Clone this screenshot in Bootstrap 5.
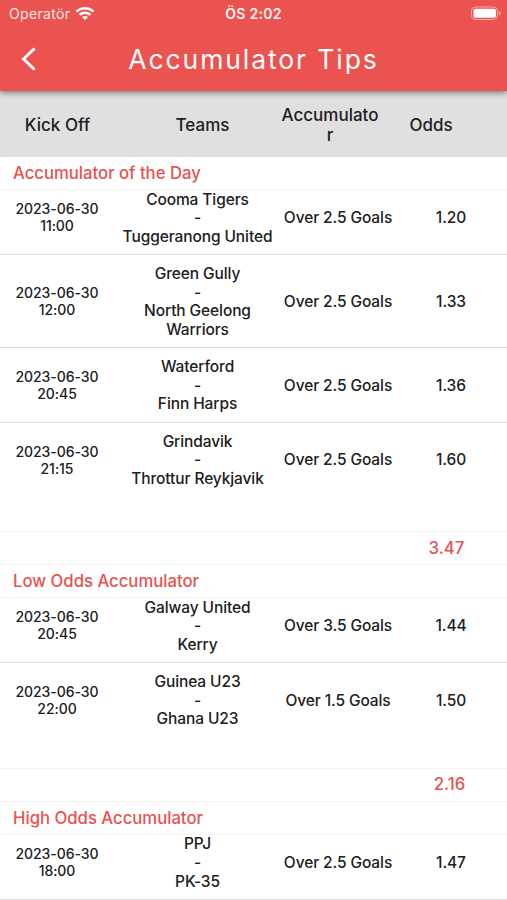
<!DOCTYPE html>
<html lang="tr">
<head>
<meta charset="utf-8">
<meta name="viewport" content="width=device-width, initial-scale=1">
<title>Accumulator Tips</title>
<link href="https://cdn.jsdelivr.net/npm/bootstrap@5.3.0/dist/css/bootstrap.min.css" rel="stylesheet">
<style>
body{font-family:Inter,"Liberation Sans",sans-serif;color:#202020;background:#fff;height:900px;overflow:hidden;font-weight:450}
.app-head{background:#ea534f;height:91px;box-shadow:0 2px 6px rgba(0,0,0,.45);z-index:2}
.status{height:27px;font-size:14px;line-height:27px;color:#ffe9e6}
.status .carrier{font-weight:400;padding-left:9px}
.status .carrier span{letter-spacing:.35px}
.wifi{margin-left:5px}
.clock{font-weight:600;font-size:14px;letter-spacing:.3px;color:#fff4f2}
.title-bar{display:grid;grid-template-columns:58px 1fr 58px;height:64px}
.screen-title{font-size:26.500px;font-weight:400;letter-spacing:1.900px;color:#fff;line-height:64px}
.tip-grid{display:grid;grid-template-columns:114px 167px 114px 112px;align-items:center;text-align:center}
.col-heads{display:grid;grid-template-columns:115px 175px 80px 122px;align-items:center;text-align:center;height:66px;padding-top:2px;background:#e0e0e0;font-size:17px;line-height:20.500px}
.col-heads .wide{width:98px;justify-self:center;word-break:break-all}
.group-title{height:33px;line-height:32px;padding-left:13px;font-size:16.700px;color:#e8524e;border-bottom:1px solid #f5f5f5}
.match{padding:10.100px 0 7.700px;border-bottom:1px solid #dcdcdc;font-size:15.500px;letter-spacing:-.1px;line-height:18.600px}
.match.first{padding:.5px 0 7.700px}
.match.last{border-bottom-color:#f5f5f5;padding-bottom:42.500px}
.short .match.last{padding-bottom:39px}
.when{font-size:14px;letter-spacing:-.05px;line-height:17px;padding-bottom:2px}
.total{height:33px;line-height:31px;color:#e8524e;font-size:16.800px;border-bottom:1px solid #f5f5f5}
.total div:last-child{padding-right:3px}
.leading .total div:last-child{padding-right:9px}
</style>
<script src="https://cdn.jsdelivr.net/npm/bootstrap@5.3.0/dist/js/bootstrap.bundle.min.js"></script>
</head>
<body>
<header class="app-head position-relative">
  <div class="status row g-0">
    <div class="col-4 d-flex align-items-center carrier"><span>Operatör</span>
      <svg class="wifi" width="20" height="15" viewBox="0 0 20 15" fill="none" stroke="#fff" stroke-width="2.500"><path d="M1.500 5.600C6.200 1 13.800 1 18.500 5.600M4.600 8.800c3-2.800 7.800-2.800 10.800 0"/><path d="M10 14l-3-3c1.700-1.500 4.300-1.500 6 0z" fill="#fff" stroke="none"/></svg>
    </div>
    <div class="col-4 text-center clock">ÖS 2:02</div>
    <div class="col-4 d-flex align-items-center justify-content-end pe-1">
      <svg width="33" height="15" viewBox="0 0 33 15"><rect x="1.500" y="1" width="26" height="12.500" rx="4" fill="none" stroke="#f5a8a4"/><rect x="3.500" y="2.800" width="22.500" height="8.900" rx="2" fill="#fff"/><path d="M28.800 5q2 .6 2 2.300t-2 2.300z" fill="#f5a8a4"/></svg>
    </div>
  </div>
  <div class="title-bar align-items-center">
    <svg class="ms-3" width="26" height="30" viewBox="0 0 26 30" fill="none" stroke="#fff" stroke-width="3"><path d="M18.500 4.500L7.500 15l11 10.500"/></svg>
    <h1 class="screen-title text-center mb-0">Accumulator Tips</h1>
  </div>
</header>
<main>
  <div class="col-heads"><div>Kick Off</div><div>Teams</div><div class="wide">Accumulator</div><div>Odds</div></div>

  <section class="leading">
  <div class="group-title">Accumulator of the Day</div>
  <div class="tip-grid match first"><div class="when">2023-06-30<br>11:00</div><div>Cooma Tigers<br>-<br>Tuggeranong United</div><div>Over 2.5 Goals</div><div>1.20</div></div>
  <div class="tip-grid match"><div class="when">2023-06-30<br>12:00</div><div>Green Gully<br>-<br>North Geelong Warriors</div><div>Over 2.5 Goals</div><div>1.33</div></div>
  <div class="tip-grid match"><div class="when">2023-06-30<br>20:45</div><div>Waterford<br>-<br>Finn Harps</div><div>Over 2.5 Goals</div><div>1.36</div></div>
  <div class="tip-grid match last"><div class="when">2023-06-30<br>21:15</div><div>Grindavik<br>-<br>Throttur Reykjavik</div><div>Over 2.5 Goals</div><div>1.60</div></div>
  <div class="tip-grid total"><div></div><div></div><div></div><div>3.47</div></div>
  </section>

  <section class="short">
  <div class="group-title">Low Odds Accumulator</div>
  <div class="tip-grid match first"><div class="when">2023-06-30<br>20:45</div><div>Galway United<br>-<br>Kerry</div><div>Over 3.5 Goals</div><div>1.44</div></div>
  <div class="tip-grid match last"><div class="when">2023-06-30<br>22:00</div><div>Guinea U23<br>-<br>Ghana U23</div><div>Over 1.5 Goals</div><div>1.50</div></div>
  <div class="tip-grid total"><div></div><div></div><div></div><div>2.16</div></div>
  </section>

  <section>
  <div class="group-title">High Odds Accumulator</div>
  <div class="tip-grid match first"><div class="when">2023-06-30<br>18:00</div><div>PPJ<br>-<br>PK-35</div><div>Over 2.5 Goals</div><div>1.47</div></div>
  </section>
</main>
</body>
</html>
